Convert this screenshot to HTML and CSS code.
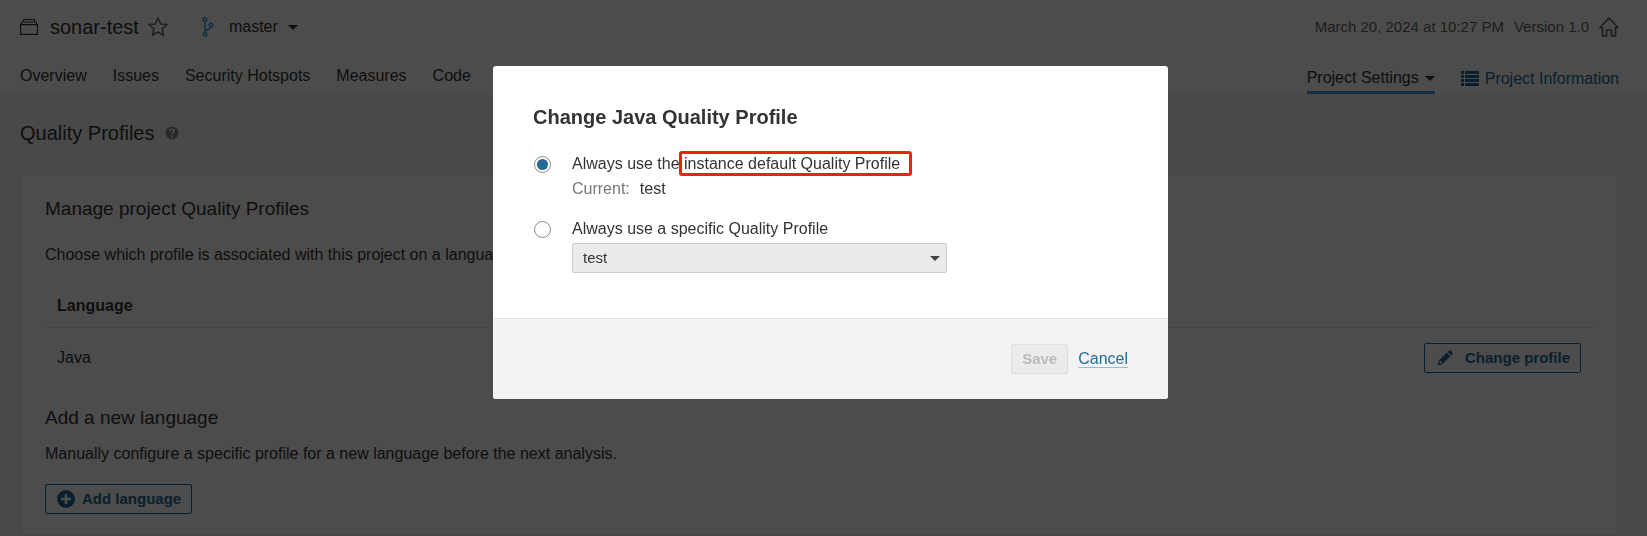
FILE: index.html
```html
<!DOCTYPE html>
<html lang="en">
<head>
    <meta charset="UTF-8">
    <meta name="viewport" content="width=device-width, initial-scale=1.0">
    <link rel="stylesheet" href="styles.css">
    <title>Quality Profiles - sonar-test</title>
</head>
<body>
    <header class="header">
        <div class="header-top">
            <svg class="icon-project" width="18" height="20" viewBox="0 0 18 20" fill="none" stroke="currentColor">
                <path d="M.6 7.600h16.800v9.800H.6z" stroke-width="1.200"/>
                <path d="M1.500 7.500V5h15v2.500M3.500 5V2.500h11V5" stroke-width="1"/>
            </svg>
            <h1 class="project-name">sonar-test</h1>
            <button class="icon-button" aria-label="Favorite">
                <svg width="20" height="20" viewBox="0 0 20 20" fill="none" stroke="currentColor" stroke-width="1.500" stroke-linejoin="round">
                    <path d="M10 1l2.600 6 6.400.6-4.900 4.200 1.500 6.600L10 15l-5.600 3.400 1.500-6.600L1 7.600 7.400 7z"/>
                </svg>
            </button>
            <button class="branch">
                <svg width="14" height="20" viewBox="0 0 14 20" fill="none" stroke="#4b9fd5" stroke-width="1.500">
                    <circle cx="4" cy="2.500" r="1.800"/>
                    <circle cx="4" cy="17.500" r="1.800"/>
                    <circle cx="10" cy="8" r="1.800"/>
                    <path d="M4 4.300v11.400M10 9.800c0 3.500-6 2-6 5"/>
                </svg>
                <span class="branch-name">master</span>
                <span class="caret"></span>
            </button>
            <div class="meta">
                <span>March 20, 2024 at 10:27 PM</span>
                <span>Version 1.0</span>
                <button class="icon-button" aria-label="Set as homepage">
                    <svg width="20" height="20" viewBox="0 0 20 20" fill="none" stroke="currentColor" stroke-width="1.700" stroke-linejoin="round">
                        <path d="M1 10.500L10 1l9 9.500h-2.500v8.500h-4v-6h-5v6h-4v-8.500z"/>
                    </svg>
                </button>
            </div>
        </div>
        <nav class="nav">
            <a href="#">Overview</a>
            <a href="#">Issues</a>
            <a href="#">Security Hotspots</a>
            <a href="#">Measures</a>
            <a href="#">Code</a>
            <div class="nav-right">
                <a href="#" class="active">Project Settings <span class="caret"></span></a>
                <a href="#" class="info">
                    <svg width="18" height="16" viewBox="0 0 18 16" fill="currentColor">
                        <path d="M0 0h3v3H0zM4 0h14v3H4zM0 4h3v3H0zM4 4h14v3H4zM0 8h3v3H0zM4 8h14v3H4zM0 12h3v3H0zM4 12h14v3H4z"/>
                    </svg>
                    Project Information
                </a>
            </div>
        </nav>
    </header>

    <main class="page">
        <div class="page-title">
            <h2>Quality Profiles</h2>
            <svg width="14" height="14" viewBox="0 0 14 14">
                <circle cx="7" cy="7" r="6.500" fill="#888"/>
                <path d="M4.900 5.400c0-2.700 4.300-2.700 4.300-.2C9.200 6.700 7.100 6.700 7.100 8.400M7.100 9.500v1.700" fill="none" stroke="#f3f3f3" stroke-width="1.700"/>
            </svg>
        </div>
        <section class="card">
            <h3>Manage project Quality Profiles</h3>
            <p class="intro">Choose which profile is associated with this project on a language-by-language basis.</p>
            <table class="profiles">
                <thead>
                    <tr>
                        <th>Language</th>
                        <th></th>
                    </tr>
                </thead>
                <tbody>
                    <tr>
                        <td>Java</td>
                        <td class="action">
                            <button class="button edit">
                                <svg width="16" height="16" viewBox="0 0 16 16" fill="currentColor">
                                    <path fill-rule="evenodd" d="M9.800 2.800l3.400 3.400L4.500 15H1v-3.500zM3.200 10.800l-1 1v1h1v1h1l1-1zM10.600 2l1.400-1.400c.5-.5 1-.5 1.500 0l2 2c.4.4.4.9 0 1.400L14 5.400z"/>
                                </svg>
                                Change profile
                            </button>
                        </td>
                    </tr>
                </tbody>
            </table>
            <h3>Add a new language</h3>
            <p class="hint">Manually configure a specific profile for a new language before the next analysis.</p>
            <button class="button add">
                <svg width="18" height="18" viewBox="0 0 18 18">
                    <circle cx="9" cy="9" r="9" fill="currentColor"/>
                    <path d="M9 4v10M4 9h10" stroke="#fff" stroke-width="2.500"/>
                </svg>
                Add language
            </button>
        </section>
    </main>

    <div class="overlay">
        <form class="modal" role="dialog" aria-labelledby="modal-title">
            <div class="modal-body">
                <h2 id="modal-title">Change Java Quality Profile</h2>
                <div class="option">
                    <input type="radio" name="profile" id="use-default" checked>
                    <div class="option-text">
                        <label for="use-default">Always use the <span class="marked">instance default Quality Profile</span></label>
                        <div class="current"><span class="note">Current:</span> <span>test</span></div>
                    </div>
                </div>
                <div class="option">
                    <input type="radio" name="profile" id="use-specific">
                    <div class="option-text">
                        <label for="use-specific">Always use a specific Quality Profile</label>
                        <div class="select">
                            <select aria-label="Quality Profile" disabled>
                                <option>test</option>
                            </select>
                            <span class="caret"></span>
                        </div>
                    </div>
                </div>
            </div>
            <div class="modal-foot">
                <button type="submit" class="save" disabled>Save</button>
                <a href="#" class="cancel">Cancel</a>
            </div>
        </form>
    </div>
</body>
</html>
```
FILE: styles.css
```css
* {
    box-sizing: border-box;
}

body {
    margin: 0;
    background-color: #f3f3f3;
    color: #333;
    font-family: "Liberation Sans", Arial, sans-serif;
    font-size: 16px;
    line-height: 24px;
}

h1, h2, h3, p {
    margin: 0;
    font-weight: 400;
}

h1, h2, h3 {
    font-size: 20px;
}

a {
    color: inherit;
    text-decoration: none;
}

button {
    font: inherit;
    color: inherit;
    cursor: pointer;
}

svg {
    flex: none;
}

.caret {
    display: inline-block;
    border: 5px solid transparent;
    border-top-color: currentColor;
    border-bottom: 0;
}

/* header */
.header {
    padding: 0 28px 0 20px;
    background-color: #fff;
}

.header-top {
    display: flex;
    align-items: center;
    height: 54px;
}

.icon-project {
    margin-right: 12px;
}

.icon-button {
    display: flex;
    padding: 0;
    border: 0;
    background: none;
    color: #666;
}

.project-name {
    margin-right: 9px;
}

.branch {
    display: flex;
    align-items: center;
    margin-left: 33px;
    padding: 0;
    border: 0;
    background: none;
}

.branch-name {
    margin: 0 10px 0 14px;
}

.meta {
    display: flex;
    align-items: center;
    gap: 10px;
    margin-left: auto;
    color: #666;
    font-size: 15px;
}

.nav {
    display: flex;
    gap: 26px;
}

.nav a {
    padding-top: 10px;
}

.nav-right {
    display: flex;
    gap: 26px;
    margin-left: auto;
}

.nav-right a {
    display: flex;
    align-items: center;
    gap: 6px;
    height: 40px;
}

.nav-right .active {
    padding-top: 11px;
    border-bottom: 3px solid #4b9fd5;
}

.nav-right .info {
    color: #236a97;
}

/* page */
.page {
    padding: 27px 29px 2px 20px;
}

.page-title {
    display: flex;
    align-items: center;
    gap: 10px;
    margin-bottom: 29px;
}

.card {
    padding: 22px 24px 20px;
    border: 1px solid #e6e6e6;
    background-color: #fff;
}

.card h3 {
    font-size: 19px;
}

.intro {
    margin-top: 22px;
}

.profiles {
    width: 100%;
    margin: 17px 0 18px;
    border-collapse: collapse;
}

.profiles th {
    padding: 10px 12px 9px;
    border-bottom: 1px solid #e6e6e6;
    text-align: left;
}

.profiles td {
    padding: 15px 12px;
}

.profiles .action {
    text-align: right;
}

.button {
    display: inline-flex;
    align-items: center;
    height: 30px;
    padding: 0 10px;
    border: 1px solid #236a97;
    border-radius: 2px;
    background-color: #fff;
    color: #236a97;
    font-size: 15px;
    font-weight: 700;
    vertical-align: top;
}

.edit {
    gap: 12px;
    padding-left: 12px;
}

.hint {
    margin-top: 12px;
    margin-bottom: 18px;
}

.add {
    gap: 7px;
    padding-left: 11px;
}

/* modal */
.overlay {
    position: fixed;
    inset: 0;
    padding: 66px 0 0 14px;
    background-color: rgba(0, 0, 0, 0.7);
}

.modal {
    width: 100%;
    max-width: 675px;
    margin: 0 auto;
    overflow: hidden;
    border-radius: 3px;
    background-color: #fff;
}

.modal-body {
    padding: 39px 40px 45px;
}

.modal-body h2 {
    margin-bottom: 23px;
    font-weight: 700;
}

.option {
    display: flex;
    gap: 20px;
}

.option + .option {
    margin-top: 15px;
}

.option input {
    appearance: none;
    flex: none;
    width: 17px;
    height: 17px;
    margin: 4px 1px;
    border: 1px solid #888;
    border-radius: 50%;
    background-color: #fff;
}

.option input:checked {
    background: #236a97 content-box;
    padding: 2px;
}

.option-text {
    display: flex;
    flex-direction: column;
    align-items: flex-start;
}

.marked {
    position: relative;
}

/* red frame lies over the text around it */
.marked::after {
    content: "";
    position: absolute;
    inset: -4px -12px -4px -5px;
    border: 3px solid #fc1c13;
    border-radius: 3px;
}

.current {
    display: flex;
    gap: 10px;
    margin-top: 1px;
}

.note {
    color: #777;
}

.option + .option {
    margin-top: 16px;
}

.select {
    position: relative;
    width: 375px;
    max-width: 100%;
    margin-top: 2px;
}

.select select {
    appearance: none;
    display: block;
    width: 100%;
    height: 30px;
    padding: 0 10px;
    border: 1px solid #ccc;
    border-radius: 2px;
    background-color: #ebebeb;
    color: #333;
    font: inherit;
    font-size: 15px;
    opacity: 1;
}

.select .caret {
    position: absolute;
    top: 13px;
    right: 7px;
    color: #444;
    pointer-events: none;
}

.modal-foot {
    display: flex;
    justify-content: flex-end;
    align-items: center;
    gap: 10px;
    padding: 25px 40px;
    border-top: 1px solid #e6e6e6;
    background-color: #f3f3f3;
}

.save {
    height: 30px;
    padding: 0 10px;
    border: 1px solid #ddd;
    border-radius: 2px;
    background-color: #ebebeb;
    color: #bbb;
    font-size: 15px;
    font-weight: 700;
}

.cancel {
    border-bottom: 1px solid #8abfdf;
    color: #236a97;
    line-height: 17px;
}
```
